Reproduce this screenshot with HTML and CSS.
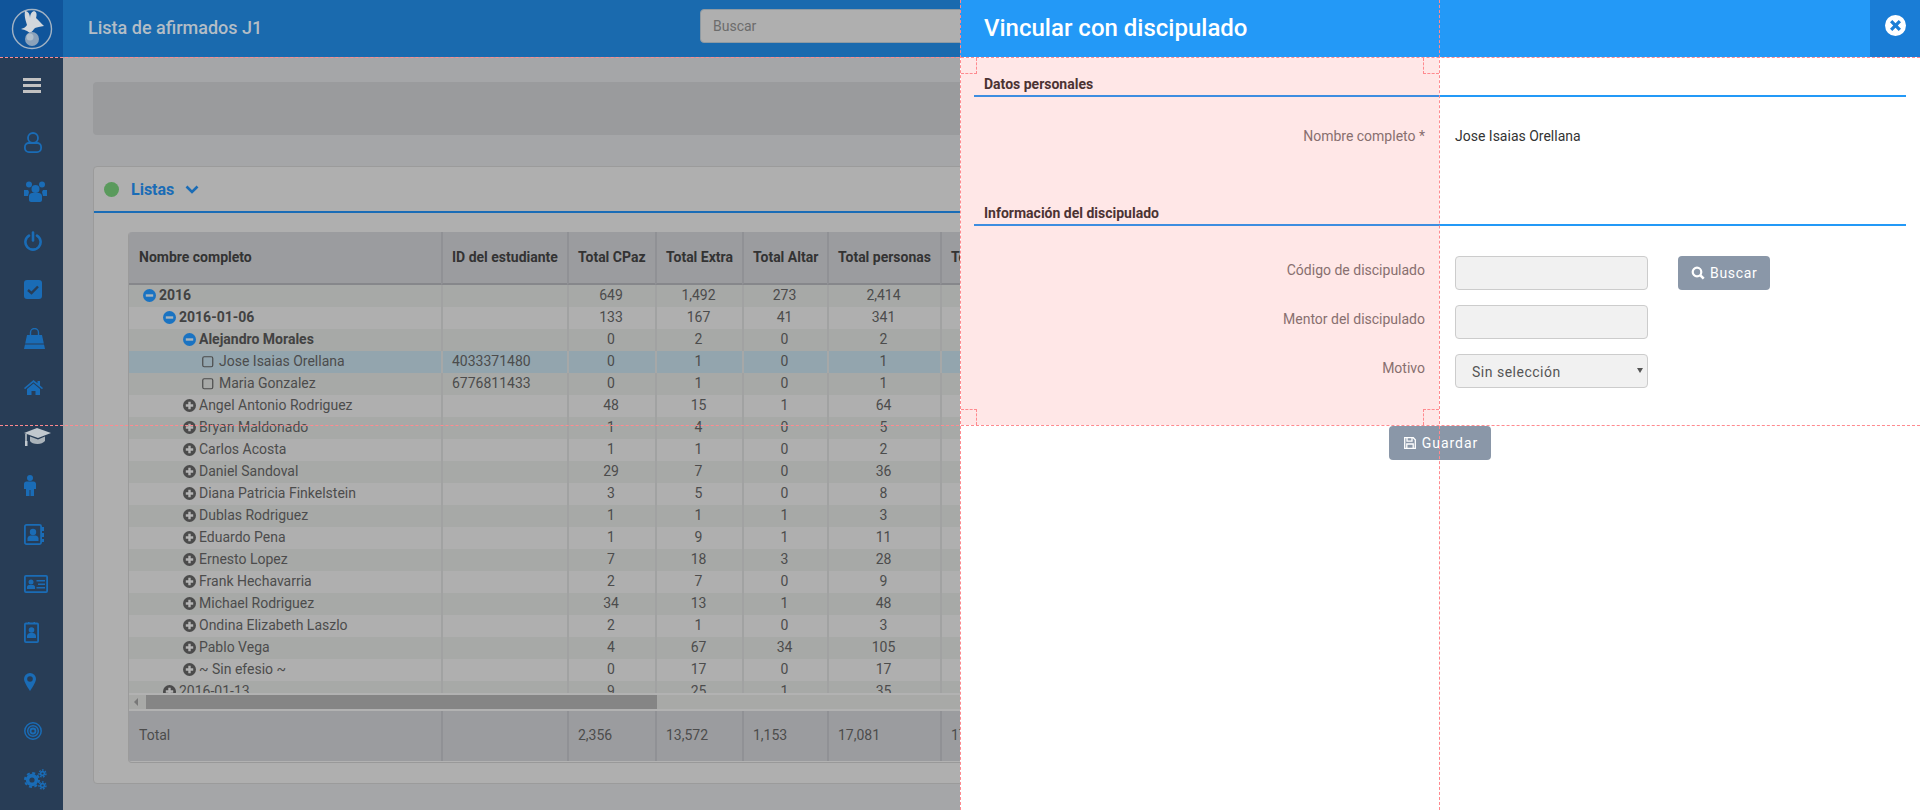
FILE: index.html
```html
<!DOCTYPE html>
<html>
<head>
    <title>Lista de afirmados J1</title>
    <link rel="stylesheet" href="styles.css">
</head>
<body>
    <svg class="defs" width="0" height="0">
        <symbol id="plus" viewBox="0 0 13 13">
            <circle cx="6.5" cy="6.5" r="6.5" fill="#4b4b4b"/>
            <path d="M5.3 2.8h2.4v2.5h2.5v2.4H7.7v2.5H5.3V7.7H2.8V5.3h2.5z" fill="#b4b4b4"/>
        </symbol>
        <symbol id="minus" viewBox="0 0 13 13">
            <circle cx="6.5" cy="6.5" r="6.5" fill="#1a73c2"/>
            <rect x="2.8" y="5.3" width="7.4" height="2.4" fill="#a9b4bc"/>
        </symbol>
        <symbol id="box" viewBox="0 0 12 12">
            <rect x=".75" y=".75" width="10" height="10" rx="1.5" fill="none" stroke="#4b4b4b" stroke-width="1.2"/>
        </symbol>
    </svg>

    <div class="app">
        <div class="logo">
            <svg width="42" height="42" viewBox="0 0 42 42">
                <circle cx="21" cy="21" r="19.5" fill="none" stroke="#a3b3c4" stroke-width="1.4"/>
                <path d="M14 3c3 0 5 3 5 7 0-3 1-6 4-7 3 1 3 4 2 7 3 3 5 5 8 8-4 1-7 1-9 2-2 2-3 4-5 5-3-2-4-3-9-4 3-1 5-2 6-4-1-4-3-8-2-14z" fill="#d2d7dc"/>
                <circle cx="21" cy="31" r="7" fill="#8ba2ba"/>
                <circle cx="19" cy="29" r="3.5" fill="#b0bfcc"/>
            </svg>
        </div>
        <header class="topbar">
            <h1 class="page-title">Lista de afirmados J1</h1>
            <input class="search" type="text" placeholder="Buscar">
        </header>

        <nav class="sidebar">
            <div class="burger"><span></span><span></span><span></span></div>
            <a class="nav-item">
                <svg width="18" height="21" viewBox="0 0 18 21" fill="none" stroke="#1a6cb6" stroke-width="1.8"><circle cx="9" cy="6" r="5"/><rect x=".9" y="11" width="16.200" height="9.100" rx="4"/></svg>
            </a>
            <a class="nav-item">
                <svg width="23" height="21" viewBox="0 0 23 21" fill="#1a6cb6"><circle cx="5" cy="3.5" r="3"/><circle cx="18" cy="3.5" r="3"/><circle cx="11.5" cy="8" r="4"/><path d="M0 9h4l1 2-1 4H0zM23 9h-4l-1 2 1 4h4z"/><path d="M5 15c0-2 2-3 3-3h7c1 0 3 1 3 3v4c0 1-1 2-2 2H7c-1 0-2-1-2-2z"/></svg>
            </a>
            <a class="nav-item">
                <svg width="18" height="20" viewBox="0 0 18 20" fill="none" stroke="#1a6cb6" stroke-width="2.6" stroke-linecap="round"><path d="M5 4.6a7.6 7.6 0 1 0 8 0"/><path d="M9 1.5v8"/></svg>
            </a>
            <a class="nav-item">
                <svg width="18" height="19" viewBox="0 0 18 19"><rect width="18" height="19" rx="3" fill="#1a6cb6"/><path d="M4 10l3.5 3.2L14 6.5" fill="none" stroke="#283d56" stroke-width="2.4"/></svg>
            </a>
            <a class="nav-item">
                <svg width="21" height="21" viewBox="0 0 21 21" fill="#1a6cb6"><path d="M3 7h15l3 14H0z"/><path d="M6.5 9V4.5a4 4 0 0 1 8 0V9" fill="none" stroke="#1a6cb6" stroke-width="1.4"/><rect y="15.5" width="21" height="1" fill="#283d56"/></svg>
            </a>
            <a class="nav-item">
                <svg width="19" height="15" viewBox="0 0 19 15" fill="#1a6cb6"><path d="M9.5 0L0 8l1 1.2 8.5-7 8.5 7L19 8l-3-2.6V1h-2.5v2.3z"/><path d="M9.5 3.5L3 9v6h4.5v-4h4v4H16V9z"/></svg>
            </a>
            <a class="nav-item">
                <svg width="27" height="18" viewBox="0 0 27 18"><path d="M13 0l14 5-13 5L0 5z" fill="#c1c8ce"/><path d="M6 8.5l8 3 7-3V13c-2 2-4 3-7.500 3S7 15 6 13z" fill="#aab3ba"/><path d="M2 6v7" stroke="#c1c8ce" stroke-width="1.500"/><path d="M1 13h2.500v5H1z" fill="#c1c8ce"/></svg>
            </a>
            <a class="nav-item">
                <svg width="12" height="21" viewBox="0 0 12 21" fill="#1a6cb6"><circle cx="6" cy="3" r="3"/><path d="M2.500 6.500h7c1.500 0 2.500 1 2.500 2.500v5h-2v7H6.500v-6h-1v6H2v-7H0V9c0-1.500 1-2.500 2.500-2.500z"/></svg>
            </a>
            <a class="nav-item">
                <svg width="20" height="21" viewBox="0 0 20 21"><rect x=".9" y=".9" width="16.200" height="19.200" rx="1.500" fill="none" stroke="#1a6cb6" stroke-width="1.800"/><circle cx="9" cy="8" r="3.200" fill="#1a6cb6"/><path d="M3.500 17v-2.500c0-2 2-3 3-3h5c1 0 3 1 3 3V17z" fill="#1a6cb6"/><path d="M18 3h2v4h-2zM18 9h2v4h-2zM18 15h2v3h-2z" fill="#1a6cb6"/></svg>
            </a>
            <a class="nav-item">
                <svg width="24" height="18" viewBox="0 0 24 18"><rect x=".9" y=".9" width="22.200" height="16.200" rx="1" fill="none" stroke="#1a6cb6" stroke-width="1.800"/><circle cx="7" cy="7" r="2.500" fill="#1a6cb6"/><path d="M3 14v-2c0-1.500 1.500-2 2.500-2h3c1 0 2.500.5 2.500 2v2z" fill="#1a6cb6"/><path d="M12.500 5H21v1.500h-8.500zM14 8.500h7V10h-7zM12.500 12H21v1.500h-8.500z" fill="#1a6cb6"/></svg>
            </a>
            <a class="nav-item">
                <svg width="15" height="21" viewBox="0 0 15 21"><rect x=".9" y="1.500" width="13.200" height="18.600" rx="1" fill="none" stroke="#1a6cb6" stroke-width="1.800"/><path d="M4 0h1.500v2H4zM9.500 0H11v2H9.500z" fill="#1a6cb6"/><circle cx="7.500" cy="8" r="2.800" fill="#1a6cb6"/><path d="M3 16v-2c0-2 2-3 3-3h3c1 0 3 1 3 3v2z" fill="#1a6cb6"/></svg>
            </a>
            <a class="nav-item">
                <svg width="12" height="18" viewBox="0 0 12 18"><path d="M6 0a6 6 0 0 1 6 6c0 3-4 9-6 12C4 15 0 9 0 6a6 6 0 0 1 6-6z" fill="#1a6cb6"/><circle cx="6" cy="6" r="2.800" fill="#283d56"/></svg>
            </a>
            <a class="nav-item">
                <svg width="18" height="18" viewBox="0 0 18 18" fill="none" stroke="#1a6cb6"><circle cx="9" cy="9" r="8.200" stroke-width="1.500"/><circle cx="9" cy="9" r="5.300" stroke-width="1.500"/><circle cx="9" cy="9" r="2.500" stroke-width="1.800"/></svg>
            </a>
            <a class="nav-item">
                <svg width="23" height="21" viewBox="0 0 23 21" fill="none" stroke="#1a6cb6"><circle cx="8" cy="11" r="4.400" stroke-width="3.600"/><circle cx="8" cy="11" r="7" stroke-width="2" stroke-dasharray="3 2.500"/><circle cx="18.500" cy="4.500" r="1.900" stroke-width="1.600"/><circle cx="18.500" cy="4.500" r="3.500" stroke-width="1.400" stroke-dasharray="1.800 1.300"/><circle cx="18.500" cy="16.500" r="1.900" stroke-width="1.600"/><circle cx="18.500" cy="16.500" r="3.500" stroke-width="1.400" stroke-dasharray="1.800 1.300"/></svg>
            </a>
        </nav>

        <main class="content">
            <div class="filter-bar"></div>
            <section class="panel">
                <div class="panel-head">
                    <span class="status-dot"></span>
                    <span class="panel-title">Listas</span>
                    <svg width="14" height="9" viewBox="0 0 14 9"><path d="M1.500 1.500L7 7l5.500-5.500" fill="none" stroke="#1a6cb6" stroke-width="2.600"/></svg>
                </div>
                <div class="grid-wrap">
                    <table class="grid grid-head">
                        <colgroup><col class="c-name"><col class="c-id"><col class="c-a"><col class="c-b"><col class="c-c"><col class="c-d"><col class="c-e"></colgroup>
                        <tr>
                            <th>Nombre completo</th>
                            <th>ID del estudiante</th>
                            <th>Total CPaz</th>
                            <th>Total Extra</th>
                            <th>Total Altar</th>
                            <th>Total personas</th>
                            <th>Total general</th>
                        </tr>
                    </table>
                    <div class="grid-scroll">
                        <table class="grid grid-body">
                            <colgroup><col class="c-name"><col class="c-id"><col class="c-a"><col class="c-b"><col class="c-c"><col class="c-d"><col class="c-e"></colgroup>
                            <tr class="strong"><td class="lv0"><svg class="tog"><use href="#minus"/></svg>2016</td><td></td><td>649</td><td>1,492</td><td>273</td><td>2,414</td><td></td></tr>
                            <tr class="strong"><td class="lv1"><svg class="tog"><use href="#minus"/></svg>2016-01-06</td><td></td><td>133</td><td>167</td><td>41</td><td>341</td><td></td></tr>
                            <tr class="strong"><td class="lv2"><svg class="tog"><use href="#minus"/></svg>Alejandro Morales</td><td></td><td>0</td><td>2</td><td>0</td><td>2</td><td></td></tr>
                            <tr class="selected"><td class="leaf"><svg class="chk"><use href="#box"/></svg>Jose Isaias Orellana</td><td>4033371480</td><td>0</td><td>1</td><td>0</td><td>1</td><td></td></tr>
                            <tr><td class="leaf"><svg class="chk"><use href="#box"/></svg>Maria Gonzalez</td><td>6776811433</td><td>0</td><td>1</td><td>0</td><td>1</td><td></td></tr>
                            <tr><td class="lv2"><svg class="tog"><use href="#plus"/></svg>Angel Antonio Rodriguez</td><td></td><td>48</td><td>15</td><td>1</td><td>64</td><td></td></tr>
                            <tr><td class="lv2"><svg class="tog"><use href="#plus"/></svg>Bryan Maldonado</td><td></td><td>1</td><td>4</td><td>0</td><td>5</td><td></td></tr>
                            <tr><td class="lv2"><svg class="tog"><use href="#plus"/></svg>Carlos Acosta</td><td></td><td>1</td><td>1</td><td>0</td><td>2</td><td></td></tr>
                            <tr><td class="lv2"><svg class="tog"><use href="#plus"/></svg>Daniel Sandoval</td><td></td><td>29</td><td>7</td><td>0</td><td>36</td><td></td></tr>
                            <tr><td class="lv2"><svg class="tog"><use href="#plus"/></svg>Diana Patricia Finkelstein</td><td></td><td>3</td><td>5</td><td>0</td><td>8</td><td></td></tr>
                            <tr><td class="lv2"><svg class="tog"><use href="#plus"/></svg>Dublas Rodriguez</td><td></td><td>1</td><td>1</td><td>1</td><td>3</td><td></td></tr>
                            <tr><td class="lv2"><svg class="tog"><use href="#plus"/></svg>Eduardo Pena</td><td></td><td>1</td><td>9</td><td>1</td><td>11</td><td></td></tr>
                            <tr><td class="lv2"><svg class="tog"><use href="#plus"/></svg>Ernesto Lopez</td><td></td><td>7</td><td>18</td><td>3</td><td>28</td><td></td></tr>
                            <tr><td class="lv2"><svg class="tog"><use href="#plus"/></svg>Frank Hechavarria</td><td></td><td>2</td><td>7</td><td>0</td><td>9</td><td></td></tr>
                            <tr><td class="lv2"><svg class="tog"><use href="#plus"/></svg>Michael Rodriguez</td><td></td><td>34</td><td>13</td><td>1</td><td>48</td><td></td></tr>
                            <tr><td class="lv2"><svg class="tog"><use href="#plus"/></svg>Ondina Elizabeth Laszlo</td><td></td><td>2</td><td>1</td><td>0</td><td>3</td><td></td></tr>
                            <tr><td class="lv2"><svg class="tog"><use href="#plus"/></svg>Pablo Vega</td><td></td><td>4</td><td>67</td><td>34</td><td>105</td><td></td></tr>
                            <tr><td class="lv2"><svg class="tog"><use href="#plus"/></svg>~ Sin efesio ~</td><td></td><td>0</td><td>17</td><td>0</td><td>17</td><td></td></tr>
                            <tr><td class="lv1"><svg class="tog"><use href="#plus"/></svg>2016-01-13</td><td></td><td>9</td><td>25</td><td>1</td><td>35</td><td></td></tr>
                        </table>
                    </div>
                    <div class="hscroll">
                        <span class="hscroll-arrow"></span>
                        <span class="hscroll-thumb"></span>
                    </div>
                    <table class="grid grid-foot">
                        <colgroup><col class="c-name"><col class="c-id"><col class="c-a"><col class="c-b"><col class="c-c"><col class="c-d"><col class="c-e"></colgroup>
                        <tr>
                            <td>Total</td>
                            <td></td>
                            <td>2,356</td>
                            <td>13,572</td>
                            <td>1,153</td>
                            <td>17,081</td>
                            <td>17,081</td>
                        </tr>
                    </table>
                </div>
            </section>
        </main>
    </div>

    <aside class="drawer">
        <div class="drawer-head">
            <h2 class="drawer-title">Vincular con discipulado</h2>
            <button class="drawer-close" type="button">
                <svg width="21" height="21" viewBox="0 0 21 21"><circle cx="10.500" cy="10.500" r="10.500" fill="#fff"/><path d="M7.300 5l3.200 3.200L13.700 5 16 7.300l-3.200 3.200 3.200 3.200-2.300 2.300-3.200-3.200L7.300 16 5 13.700l3.200-3.200L5 7.300z" fill="#1a7dd6"/></svg>
            </button>
        </div>
        <div class="drawer-body">
            <h3 class="section-title">Datos personales</h3>
            <div class="form-row row-static">
                <label class="form-label">Nombre completo *</label>
                <span class="form-value">Jose Isaias Orellana</span>
            </div>

            <h3 class="section-title section-second">Información del discipulado</h3>
            <div class="form-row row-first">
                <label class="form-label">Código de discipulado</label>
                <input class="form-input" type="text">
                <button class="btn" type="button">
                    <svg width="14" height="14" viewBox="0 0 14 14"><circle cx="6" cy="6" r="4.300" fill="none" stroke="#fff" stroke-width="2.200"/><path d="M9.200 9.200l3.500 3.500" stroke="#fff" stroke-width="2.600"/></svg>
                    Buscar
                </button>
            </div>
            <div class="form-row">
                <label class="form-label">Mentor del discipulado</label>
                <input class="form-input" type="text">
            </div>
            <div class="form-row">
                <label class="form-label">Motivo</label>
                <div class="select-wrap">
                    <select class="form-input form-select">
                        <option>Sin selección</option>
                    </select>
                </div>
            </div>
            <div class="form-actions">
                <button class="btn btn-save" type="button">
                    <svg width="12" height="12" viewBox="0 0 12 12" fill="none" stroke="#fff" stroke-width="1.300"><path d="M.7.700h8.600l2 2v8.600H.7z"/><path d="M3 1v3.200h5V1M2.800 11V7h6.400v4"/></svg>
                    Guardar
                </button>
            </div>
        </div>
    </aside>

    <div class="guides">
        <div class="guide-area"></div>
        <div class="guide-corner corner-tl"></div>
        <div class="guide-corner corner-tr"></div>
        <div class="guide-corner corner-bl"></div>
        <div class="guide-corner corner-br"></div>
        <div class="guide-h line-top"></div>
        <div class="guide-h line-bottom"></div>
        <div class="guide-v line-left"></div>
        <div class="guide-v line-right"></div>
    </div>
</body>
</html>
```

FILE: styles.css
```css
html, body {
    margin: 0;
    height: 810px;
    overflow: hidden;
    font-family: Roboto, "Liberation Sans", sans-serif;
    font-size: 14px;
    color: #4c4c4c;
}
.defs {
    display: block;
}

.app {
    display: grid;
    grid-template-columns: 63px 1fr;
    grid-template-rows: 57px 753px;
    height: 810px;
}

/* top bar */
.logo {
    background: #10559b;
    display: flex;
    align-items: center;
    justify-content: center;
    padding-left: 1px;
}
.topbar {
    background: #1a6aae;
    display: flex;
    align-items: center;
    padding-left: 25px;
}
.page-title {
    margin: 0 0 3px;
    width: 612px;
    font-size: 18px;
    font-weight: 500;
    color: #b3bdc6;
}
.search {
    width: 600px;
    height: 34px;
    box-sizing: border-box;
    margin-top: -5px;
    padding: 0 12px;
    background: #afafaf;
    border: 1px solid #8e9aa3;
    border-radius: 4px;
    font: 14px Roboto, sans-serif;
}
.search::placeholder {
    color: #6c6c6c;
}

/* left menu */
.sidebar {
    background: #283d56;
    padding: 21px 0 0 24px;
}
.burger {
    display: flex;
    flex-direction: column;
    gap: 3px;
    width: 18px;
    margin: 0 0 25px -1px;
}
.burger span {
    height: 3px;
    background: #c2c2c2;
}
.nav-item {
    display: flex;
    align-items: center;
    height: 49px;
}

/* page body */
.content {
    background: #a5a6a8;
    padding: 25px 30px 0;
    min-width: 0;
}
.filter-bar {
    height: 53px;
    background: #9a9b9d;
    border-radius: 4px;
    margin-bottom: 31px;
}
.panel {
    background: #afafaf;
    border: 1px solid #9b9b9b;
    border-radius: 4px;
    height: 618px;
    box-sizing: border-box;
}
.panel-head {
    height: 44px;
    display: flex;
    align-items: center;
    padding-left: 10px;
    border-bottom: 2px solid #1a6cb6;
}
.status-dot {
    width: 15px;
    height: 15px;
    border-radius: 50%;
    background: #5a9a5c;
    margin-right: 12px;
}
.panel-title {
    font-size: 16px;
    font-weight: 700;
    color: #1a6cb6;
    margin-right: 11px;
}

.grid-wrap {
    margin: 19px 20px 0 34px;
    border-left: 1px solid #9b9b9b;
    border-bottom: 1px solid #999;
    border-radius: 4px;
    padding-bottom: 1px;
    overflow: hidden;
    background: #b2b2b2;
}
.grid {
    width: 1650px;
    table-layout: fixed;
    border-collapse: separate;
    border-spacing: 0;
}
.c-name { width: 312px; }
.c-id { width: 126px; }
.c-a { width: 88px; }
.c-b { width: 87px; }
.c-c { width: 85px; }
.c-d { width: 113px; }
.c-e { width: 839px; }

.grid th, .grid td {
    padding: 0 0 0 9px;
    border-left: 2px solid transparent;
    white-space: nowrap;
    text-align: left;
}
.grid th:first-child, .grid td:first-child {
    border-left: 0;
    padding-left: 10px;
}
.grid-head th {
    height: 49px;
    padding-bottom: 2px;
    background: #9b9c9f;
    border-left-color: #909195;
    border-bottom: 2px solid #86878b;
    color: #333;
    font-weight: 700;
}
.grid-scroll {
    height: 408px;
    overflow: hidden;
}
.grid-body td {
    height: 22px;
    padding: 0 2px 0 0;
    line-height: 21px;
    vertical-align: top;
    text-align: center;
    border-left-color: #a1a2a2;
}
.grid-body td:nth-child(2) {
    text-align: left;
    padding: 0 0 0 9px;
}
.grid-body tr:nth-child(odd) {
    background: #a7a9a7;
}
.grid-body tr:nth-child(even) {
    background: #afafaf;
}
.grid-body td:first-child {
    text-align: left;
}
.grid-body tr.selected td {
    background: #93a5ae;
    border-left-color: #a6a8a8;
}
.grid-body tr.strong td:first-child {
    font-weight: 700;
    color: #424242;
}
.grid-body td.lv0 { padding-left: 14px; }
.grid-body td.lv1 { padding-left: 34px; }
.grid-body td.lv2 { padding-left: 54px; }
.grid-body td.leaf { padding-left: 73px; }
.tog, .chk {
    vertical-align: -2px;
}
.tog {
    width: 13px;
    height: 13px;
    margin-right: 3px;
}
.chk {
    width: 12px;
    height: 12px;
    margin-right: 5px;
}

.hscroll {
    display: flex;
    align-items: center;
    height: 14px;
    margin-top: 2px;
    background: #a8a9a7;
}
.hscroll-arrow {
    width: 0;
    height: 0;
    margin-left: 5px;
    margin-right: 8px;
    border-style: solid;
    border-width: 4px 4px 4px 0;
    border-color: transparent #787878 transparent transparent;
}
.hscroll-thumb {
    width: 511px;
    height: 14px;
    background: #858585;
}
.grid-foot {
    margin-top: 2px;
}
.grid-foot td {
    height: 48px;
    padding-bottom: 2px;
    background: #9b9c9f;
    border-left-color: #909195;
}

/* slide panel over the page */
.drawer {
    position: absolute;
    top: 0;
    left: 960px;
    right: 0;
    bottom: 0;
    background: #fff;
    color: #333;
}
.drawer-head {
    display: flex;
    height: 57px;
    background: #2399f7;
}
.drawer-title {
    flex: 1;
    margin: 0;
    padding-left: 24px;
    line-height: 56px;
    font-size: 24px;
    font-weight: 500;
    color: #fff;
}
.drawer-close {
    width: 50px;
    padding: 0 0 7px;
    background: #1a7dd6;
    border: 0;
}
.drawer-close svg {
    display: block;
    margin: 0 auto;
}
.drawer-body {
    padding: 17px 14px 0;
}
.section-title {
    margin: 0;
    padding: 0 0 1px 10px;
    border-bottom: 2px solid #2399f7;
    font-size: 14px;
    font-weight: 700;
    line-height: 20px;
    color: #333;
}
.section-second {
    margin-top: 57px;
}
.form-row {
    display: grid;
    grid-template-columns: 451px 193px auto;
    column-gap: 30px;
    justify-content: start;
    align-items: start;
    margin-top: 15px;
}
.row-static {
    margin-top: 29px;
}
.row-first {
    margin-top: 30px;
}
.form-label {
    text-align: right;
    line-height: 20px;
    padding-top: 4px;
    color: #777;
}
.row-static .form-label {
    padding-top: 0;
}
.form-value {
    line-height: 20px;
}
.form-input {
    display: block;
    width: 193px;
    height: 34px;
    box-sizing: border-box;
    background: #f1f1f1;
    border: 1px solid #ccc;
    border-radius: 4px;
    color: #555;
    font: 14px Roboto, sans-serif;
    letter-spacing: .5px;
}
.form-select {
    appearance: none;
    padding: 2px 16px 0;
}
.select-wrap {
    position: relative;
}
.select-wrap::after {
    content: "";
    position: absolute;
    right: 5px;
    top: 14px;
    border-style: solid;
    border-width: 5px 3px 0;
    border-color: #555 transparent transparent;
}
.btn {
    display: inline-flex;
    align-items: center;
    gap: 5px;
    height: 34px;
    padding: 0 12px 0 13px;
    background: #8a97a8;
    border: 0;
    border-radius: 4px;
    color: #fff;
    font: 14px Roboto, sans-serif;
    letter-spacing: .7px;
}
.btn-save {
    gap: 6px;
    padding: 0 13px 0 15px;
    letter-spacing: 1px;
}
.form-actions {
    display: flex;
    justify-content: center;
    margin-top: 38px;
}

/* layout guides drawn over everything */
.guides {
    position: absolute;
    inset: 0;
    pointer-events: none;
}
.guide-area {
    position: absolute;
    left: 961px;
    top: 58px;
    width: 478px;
    height: 367px;
    background: rgba(255, 60, 60, .12);
}
.guide-corner {
    position: absolute;
    width: 15px;
    height: 15px;
    border: 0 dashed #ff8a8f;
}
.corner-tl { left: 961px; top: 58px; border-width: 0 1px 1px 0; }
.corner-tr { left: 1423px; top: 58px; border-width: 0 0 1px 1px; }
.corner-bl { left: 961px; top: 409px; border-width: 1px 1px 0 0; }
.corner-br { left: 1423px; top: 409px; border-width: 1px 0 0 1px; }
.guide-h {
    position: absolute;
    left: 0;
    right: 0;
    border-top: 1px dashed #ff8a8f;
}
.guide-v {
    position: absolute;
    top: 0;
    bottom: 0;
    border-left: 1px dashed #ff8a8f;
}
.line-top { top: 57px; }
.line-bottom { top: 425px; }
.line-left { left: 960px; }
.line-right { left: 1439px; }
```
